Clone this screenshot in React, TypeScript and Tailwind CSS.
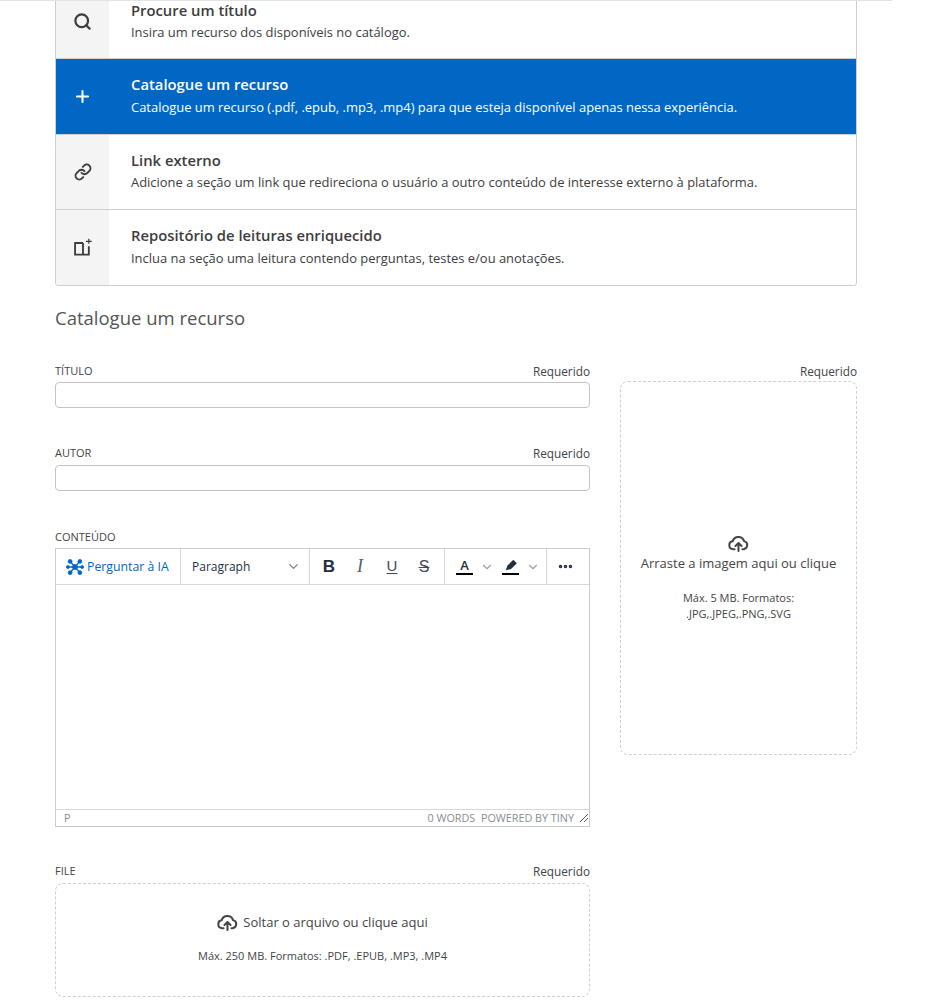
import { ChevronDown, Link, MoreHorizontal, Plus, Search } from "lucide-react";

function CloudUpload() {
  return (
    <svg className="size-[21px]" viewBox="0 0 24 24" fill="none" stroke="currentColor" strokeWidth={2.300} strokeLinecap="round" strokeLinejoin="round">
      <path d="M7.500 18.500H6a4.500 4.500 0 0 1-.6-8.960A6.800 6.800 0 0 1 18.400 9.300 4.700 4.700 0 0 1 18 18.500h-1.500" />
      <path d="M12 20.500v-8.500M8.500 14.800 12 11.500l3.500 3.300" />
    </svg>
  );
}

function BookSpark() {
  return (
    <svg className="size-[20px]" viewBox="0 0 24 24" fill="none" stroke="currentColor" strokeWidth={2.200}>
      <path d="M12 6H2.500v14H12M12 6v14M12 20h7V10" />
      <path d="M19 1v6M15.500 4h7" strokeWidth={1.500} />
    </svg>
  );
}

function AiIcon() {
  return (
    <svg className="size-[18px] text-[#0067c5]" viewBox="0 0 24 24" fill="currentColor" stroke="currentColor">
      <circle cx="12" cy="12" r="3.400" />
      <circle cx="5.500" cy="4.500" r="2.600" />
      <circle cx="18.500" cy="4.500" r="2.600" />
      <circle cx="5.500" cy="19.500" r="2.600" />
      <circle cx="18.500" cy="19.500" r="2.600" />
      <circle cx="2.500" cy="12" r="2" />
      <circle cx="21.500" cy="12" r="2" />
      <path d="M5.500 4.500l13 15M18.500 4.500l-13 15M2.500 12h19" strokeWidth={2} />
    </svg>
  );
}

function Option({ icon, title, text, active, className, iconClassName }: { icon: React.ReactNode; title: string; text: string; active?: boolean; className?: string; iconClassName?: string }) {
  return (
    <div className={`flex border-b border-[#cfcfcf] last:border-b-0 ${active ? "bg-[#0067c5] text-white" : "bg-white text-[#3d3d3d]"} ${className ?? "h-[75px]"}`}>
      <div className={`flex w-[53px] shrink-0 items-center justify-center ${active ? "" : "bg-[#f4f4f4]"} ${iconClassName ?? ""}`}>{icon}</div>
      <div className="flex flex-col justify-center pb-[2px] pl-[22px]">
        <div className="text-[14.800px] leading-[20px] font-semibold">{title}</div>
        <div className="mt-[2.500px] text-[12.950px] leading-[20px]">{text}</div>
      </div>
    </div>
  );
}

function FieldHead({ label }: { label: string }) {
  return (
    <div className="flex h-[17px] items-center justify-between">
      <span className="text-[11px] text-[#444444]">{label}</span>
      <span className="text-[11.800px] text-[#444444]">Requerido</span>
    </div>
  );
}

export default function App() {
  return (
    <div className="min-h-[1000px] overflow-hidden bg-white font-['Open_Sans',sans-serif] text-[#333333]">
      <div className="h-px w-[892px] bg-[#e4e4e4]" />
      <div className="ml-[55px] w-[802px]">
        <div className="overflow-hidden rounded-b border border-t-0 border-[#cfcfcf]">
          <Option className="h-[58px] [&>div:last-child]:-mt-[1.500px] [&>div:last-child]:justify-start" iconClassName="pb-[16px]" icon={<Search className="size-[19px]" strokeWidth={2.800} />} title="Procure um título" text="Insira um recurso dos disponíveis no catálogo." />
          <Option active className="h-[76px]" icon={<Plus className="size-[19px]" strokeWidth={2.600} />} title="Catalogue um recurso" text="Catalogue um recurso (.pdf, .epub, .mp3, .mp4) para que esteja disponível apenas nessa experiência." />
          <Option icon={<Link className="size-[18px]" strokeWidth={2.600} />} title="Link externo" text="Adicione a seção um link que redireciona o usuário a outro conteúdo de interesse externo à plataforma." />
          <Option icon={<BookSpark />} title="Repositório de leituras enriquecido" text="Inclua na seção uma leitura contendo perguntas, testes e/ou anotações." />
        </div>

        <h2 className="mt-[20px] text-[18.500px] leading-[24px] text-[#555555]">Catalogue um recurso</h2>

        <div className="mt-[33px] flex gap-[30px]">
          <div className="w-[535px] shrink-0">
            <FieldHead label="TÍTULO" />
            <div className="mt-[2px] h-[26px] rounded border border-[#c4c4c4]" />

            <div className="mt-[37px]"><FieldHead label="AUTOR" /></div>
            <div className="mt-[3px] h-[26px] rounded border border-[#c4c4c4]" />

            <div className="mt-[37px] text-[11px] leading-[17px] text-[#444444]">CONTEÚDO</div>
            <div className="mt-[3px] h-[279px] border border-[#cccccc]">
              <div className="flex h-[36px] items-center border-b border-[#d8d8d8] text-[#222f3e]">
                <div className="flex h-full w-[125px] items-center gap-[3px] border-r border-[#d8d8d8] pl-[10px] text-[12.300px] text-[#0067c5]">
                  <AiIcon />
                  <span className="pt-[2px]">Perguntar à IA</span>
                </div>
                <div className="flex h-full w-[129px] items-center justify-between border-r border-[#d8d8d8] pr-[8px] pl-[11px] text-xs">
                  <span className="pt-[1px]">Paragraph</span>
                  <ChevronDown className="size-[15px] text-[#7a838d]" />
                </div>
                <div className="flex h-full w-[135px] items-center border-r border-[#d8d8d8] pl-[12px] font-['Liberation_Sans',sans-serif]">
                  <span className="w-[14px] text-center text-[17px] font-bold">B</span>
                  <span className="ml-[18px] w-[12px] text-center font-['Liberation_Serif',serif] text-[18px] text-[#555f6b] italic">I</span>
                  <span className="ml-[19px] w-[14px] text-center text-[15px] text-[#3f4a57] underline underline-offset-2">U</span>
                  <span className="ml-[17px] w-[16px] text-center text-[16px] text-[#3f4a57] line-through">S</span>
                </div>
                <div className="flex h-full w-[102px] items-center border-r border-[#d8d8d8] pl-[11px]">
                  <div className="flex w-[17px] flex-col items-center border-b-[2px] border-black text-[13px] leading-[15px] font-semibold">A</div>
                  <ChevronDown className="ml-[7px] size-[14px] text-[#9aa1a9]" />
                  <div className="ml-[8px] flex w-[17px] justify-center border-b-[2px] border-black pb-[1px]">
                    <svg className="size-[14px]" viewBox="0 0 24 24" fill="#222f3e"><path d="M3 21l3-8L16 3l6 6-10 10z" /></svg>
                  </div>
                  <ChevronDown className="ml-[7px] size-[14px] text-[#9aa1a9]" />
                </div>
                <div className="flex flex-1 justify-center pr-[5px]">
                  <MoreHorizontal className="size-[17px]" strokeWidth={3} />
                </div>
              </div>
              <div className="h-[224px]" />
              <div className="flex h-[17px] items-center justify-between border-t border-[#d8d8d8] pl-[8px] text-[10.800px] text-[#878d94]">
                <span>P</span>
                <div className="flex items-center">
                  <span className="mr-[5px]">0 WORDS&nbsp; POWERED BY TINY</span>
                  <svg className="size-[10px]" viewBox="0 0 10 10" stroke="#555555" strokeWidth={1}><path d="M1 9 9 1M5 9l4-4" /></svg>
                </div>
              </div>
            </div>

            <div className="mt-[36px]"><FieldHead label="FILE" /></div>
            <div className="mt-[3px] flex h-[114px] flex-col items-center justify-center rounded-lg border border-dashed border-[#cfcfcf]">
              <div className="-mt-[3px] flex items-center gap-[5px] text-[13px] text-[#444444]">
                <CloudUpload />
                <span>Soltar o arquivo ou clique aqui</span>
              </div>
              <div className="mt-[15px] text-[11px] text-[#444444]">Máx. 250 MB. Formatos: .PDF, .EPUB, .MP3, .MP4</div>
            </div>
          </div>

          <div className="w-[237px] shrink-0">
            <div className="flex h-[17px] items-center justify-end text-[11.800px] text-[#444444]">Requerido</div>
            <div className="mt-[1px] flex h-[374px] flex-col items-center rounded-lg border border-dashed border-[#cfcfcf] pt-[151px] text-[#444444]">
              <CloudUpload />
              <div className="text-[13px] leading-[18px]">Arraste a imagem aqui ou clique</div>
              <div className="mt-[18px] text-center text-[11px] leading-[15.500px]">
                Máx. 5 MB. Formatos:
                <br />
                .JPG,.JPEG,.PNG,.SVG
              </div>
            </div>
          </div>
        </div>
      </div>
    </div>
  );
}
